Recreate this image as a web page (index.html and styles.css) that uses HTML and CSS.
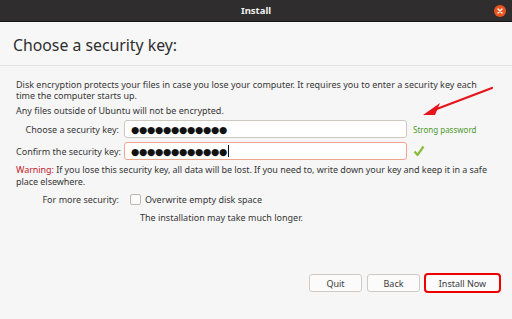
FILE: index.html
```html
<!DOCTYPE html>
<html>
<head>
<meta charset="utf-8">
<link rel="stylesheet" href="styles.css">
</head>
<body>
<div class="window">
  <div class="titlebar">
    <span class="title">Install</span>
    <span class="close"><svg width="12" height="12" viewBox="0 0 12 12"><circle cx="6" cy="6" r="6" fill="#e9541f"/><path d="M4 4 L8 8 M8 4 L4 8" stroke="#fff" stroke-width="1.4" stroke-linecap="round"/></svg></span>
  </div>
  <div class="header">
    <h1 class="heading">Choose a security key:</h1>
  </div>
  <div class="content">
    <p class="para">Disk encryption protects your files in case you lose your computer. It requires you to enter a security key each time the computer starts up.</p>
    <p class="para2">Any files outside of Ubuntu will not be encrypted.</p>
    <div class="form">
      <div class="row">
        <span class="label">Choose a security key:</span>
        <div class="field">●●●●●●●●●●●●</div>
        <span class="strong">Strong password</span>
      </div>
      <div class="row">
        <span class="label">Confirm the security key:</span>
        <div class="field focus">●●●●●●●●●●●●<span class="caret"></span></div>
        <span class="check"><svg width="12" height="12" viewBox="0 0 12 12"><path d="M1.5 6.5 L4.5 10 L10.5 1.5" fill="none" stroke="#8bbd3c" stroke-width="2.2" stroke-linejoin="round"/></svg></span>
      </div>
    </div>
    <p class="warning"><span class="warn">Warning:</span> If you lose this security key, all data will be lost. If you need to, write down your key and keep it in a safe place elsewhere.</p>
    <div class="row sec">
      <span class="label">For more security:</span>
      <span class="box"></span>
      <span class="opt">Overwrite empty disk space</span>
    </div>
    <div class="note">The installation may take much longer.</div>
    <div class="buttons">
      <button class="btn">Quit</button>
      <button class="btn">Back</button>
      <button class="btn primary">Install Now</button>
    </div>
  </div>
  <svg class="arrow" width="80" height="40" viewBox="0 0 80 40"><path d="M72 6 L14 28" stroke="#e8141b" stroke-width="2.2" stroke-linecap="round"/><path d="M3 33 L20 21 L15 33 Z" fill="#e8141b"/></svg>
</div>
</body>
</html>
```
FILE: styles.css
```css
* { box-sizing: border-box; }
html, body { margin: 0; padding: 0; }
body {
  width: 512px; height: 319px; overflow: hidden;
  font-family: "Noto Sans", "DejaVu Sans", sans-serif;
  background: #f6f6f6;
  color: #363636;
}
.window { position: relative; width: 512px; height: 319px; display: flex; flex-direction: column; }
.titlebar {
  height: 22px; background: #2f2d2e; border-bottom: 1px solid #151515;
  display: flex; align-items: center; justify-content: center; position: relative;
}
.title { color: #f2f2f2; font-weight: bold; font-size: 9.5px; }
.close { position: absolute; right: 6px; top: 5px; width: 12px; height: 12px; display: flex; }
.header { height: 44px; background: #f7f7f7; border-bottom: 1px solid #e3e3e3; display: flex; align-items: center; padding-left: 13px; }
.heading { margin: 0; font-weight: normal; font-size: 15.8px; color: #2e2e2e; padding-top: 2px; }
.content { flex: 1; padding: 13px 16px 0 16px; display: flex; flex-direction: column; }
.para { margin: 0; font-size: 9px; line-height: 11px; width: 470px; }
.para2 { margin: 4px 0 0 0; font-size: 9px; line-height: 11px; }
.form { display: flex; flex-direction: column; gap: 4px; margin-top: 4px; }
.row { display: flex; align-items: center; font-size: 9px; white-space: nowrap; }
.label { width: 108px; text-align: right; padding-right: 5px; flex: none; white-space: nowrap; }
.field {
  width: 283px; height: 18px; background: #fff; border: 1px solid #cdc7c2; border-radius: 3px;
  display: flex; align-items: center; padding-left: 6px; font-size: 9.5px; color: #111; letter-spacing: -0.3px;
}
.field.focus { border-color: #f2a58e; }
.caret { display: inline-block; width: 1px; height: 12px; background: #111; margin-left: 1px; }
.strong { color: #4c9a2a; font-size: 8px; margin-left: 6px; }
.check { margin-left: 6px; display: flex; }
.warning { margin: 4px 0 0 0; font-size: 9px; line-height: 12px; width: 484px; letter-spacing: -0.05px; }
.warn { color: #c7162b; }
.sec { margin-top: 5px; }
.box { width: 11px; height: 11px; border: 1px solid #bdb6b0; border-radius: 2px; background: #fbfbfb; margin-left: 6px; margin-right: 4px; }
.note { font-size: 9px; margin-top: 5px; padding-left: 124px; }
.buttons { margin-top: auto; margin-bottom: 27px; display: flex; justify-content: flex-end; gap: 5px; margin-right: -4px; }
.btn {
  font-family: inherit; font-size: 9px; color: #3c3c3c;
  width: 53px; height: 18px; background: #fbfbfb; border: 1px solid #cfcac6; border-radius: 3px; padding: 0;
}
.btn.primary { width: 75px; outline: 2px solid #ee0000; outline-offset: -1px; }
.arrow { position: absolute; left: 420px; top: 82px; }
```
